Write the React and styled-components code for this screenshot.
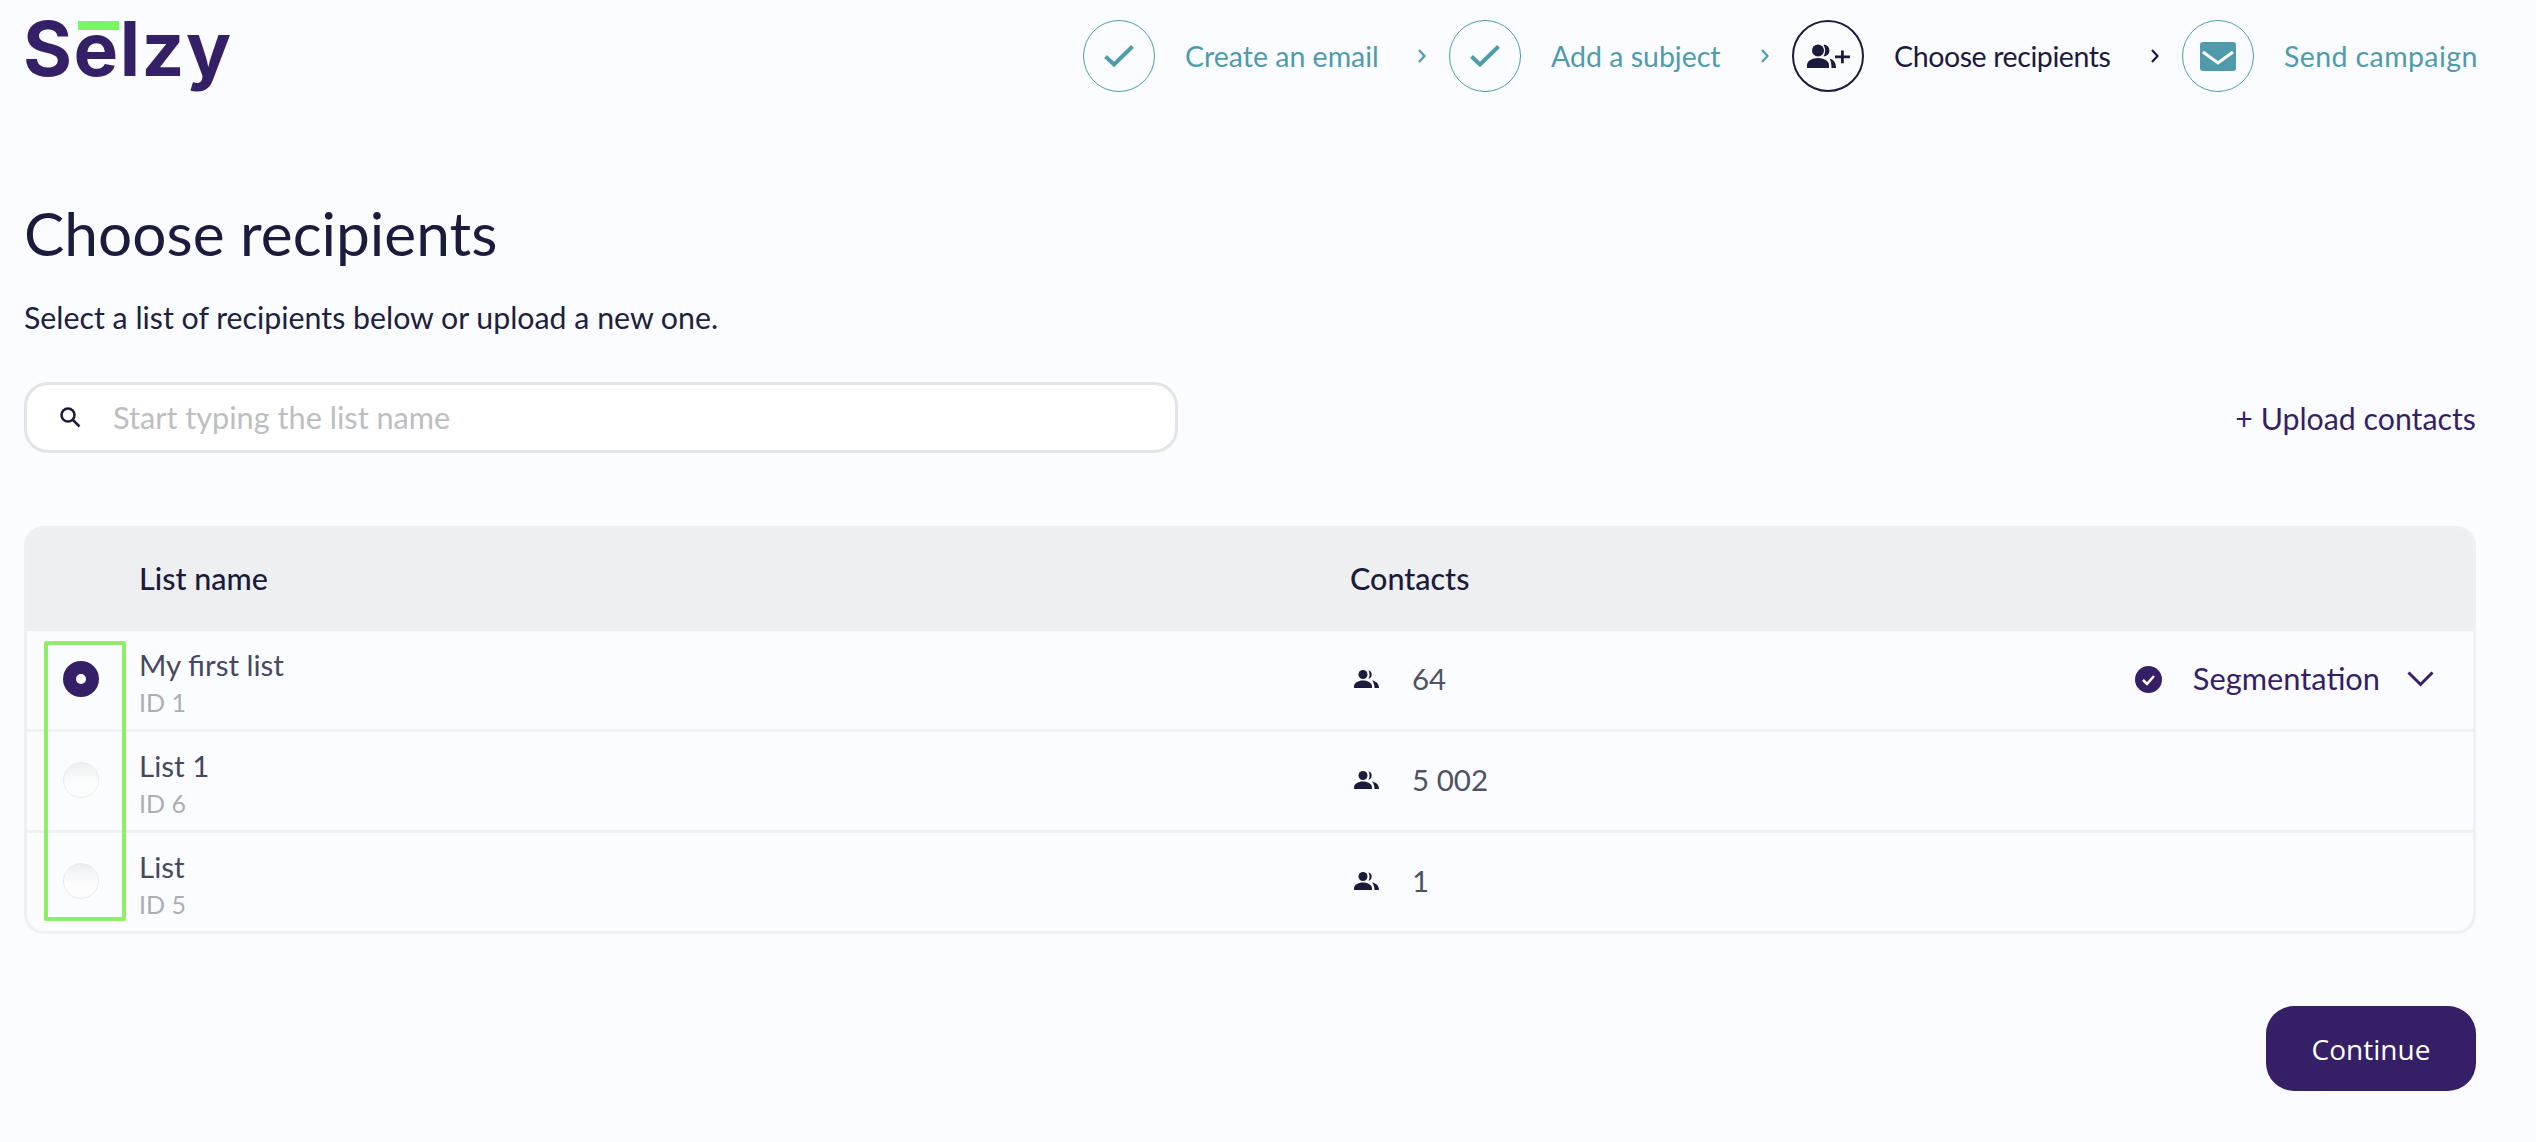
import React from 'react';
import styled, { createGlobalStyle } from 'styled-components';

const PURPLE = '#351f66';
const INK = '#1b1b3d';
const TEAL = '#4f9bab';

const GlobalStyle = createGlobalStyle`
  html, body {
    margin: 0;
    padding: 0;
    background: #fbfcff;
    font-family: Lato, "Open Sans", sans-serif;
    color: ${INK};
  }
  * { box-sizing: border-box; }
`;

const Page = styled.div`
  width: 2536px;
  height: 1142px;
  padding: 20px 60px 0 24px;
  overflow: hidden;
`;

const TopBar = styled.header`
  display: flex;
  align-items: flex-start;
  justify-content: space-between;
  height: 72px;
`;

const Logo = styled.div`
  font-family: Inter, sans-serif;
  font-weight: 700;
  font-size: 75px;
  line-height: 58px;
  letter-spacing: 1.5px;
  margin-left: -1px;
  color: ${PURPLE};
`;

const LogoE = styled.span`
  position: relative;
  &::before {
    content: '';
    position: absolute;
    left: 4px;
    right: 1px;
    top: 18px;
    height: 9px;
    background: #75fb5f;
  }
`;

const Steps = styled.nav`
  display: flex;
  align-items: center;
  margin-right: -1px;
`;

const Step = styled.div`
  display: flex;
  align-items: center;
  gap: 30px;
`;

const StepCircle = styled.div`
  width: 72px;
  height: 72px;
  border-radius: 50%;
  border: ${p => (p.$active ? '2px' : '1.5px')} solid ${p => (p.$active ? INK : TEAL)};
  display: flex;
  align-items: center;
  justify-content: center;
`;

const StepLabel = styled.span`
  font-size: 28.5px;
  line-height: 36px;
  white-space: nowrap;
  width: ${p => p.$width}px;
  letter-spacing: ${p => p.$tracking || 0}px;
  color: ${p => (p.$active ? INK : TEAL)};
`;

const StepArrow = styled.svg`
  width: 10px;
  height: 14px;
  margin: 0 22px 0 40px;
  fill: none;
  stroke: ${p => (p.$dark ? INK : TEAL)};
  stroke-width: 2.2;
`;

const Title = styled.h1`
  margin: 105px 0 0;
  font-weight: 400;
  font-size: 60.4px;
  line-height: 72px;
  color: ${INK};
`;

const Subtitle = styled.p`
  margin: 30px 0 0;
  font-size: 30.3px;
  line-height: 36px;
  color: #20203f;
`;

const SearchRow = styled.div`
  display: flex;
  align-items: center;
  justify-content: space-between;
  margin-top: 47px;
`;

const SearchBox = styled.div`
  width: 1154px;
  height: 71px;
  background: #fff;
  border: 3px solid #e2e4e6;
  border-radius: 24px;
  display: flex;
  align-items: center;
  padding-left: 33px;
  gap: 30px;
`;

const SearchInput = styled.input`
  flex: 1;
  border: 0;
  outline: 0;
  background: transparent;
  font-family: inherit;
  font-size: 30.7px;
  color: ${INK};
  &::placeholder {
    color: #bdbec2;
    opacity: 1;
  }
`;

const UploadLink = styled.a`
  font-size: 30.3px;
  line-height: 36px;
  color: ${PURPLE};
`;

const Table = styled.div`
  position: relative;
  width: 2452px;
  margin-top: 73px;
  border: 3px solid #eff0f2;
  border-radius: 20px;
  overflow: hidden;
`;

const RadioHighlight = styled.div`
  position: absolute;
  left: 17px;
  top: 112px;
  width: 82px;
  height: 280px;
  border: 4px solid #90ee66;
  border-radius: 2px;
  pointer-events: none;
`;

const Grid = styled.div`
  display: grid;
  grid-template-columns: 112px 1211px 1fr auto;
  align-items: center;
`;

const HeadRow = styled(Grid)`
  height: 102px;
  background: #eeeff1;
  padding-bottom: 5px;
`;

const HeadCell = styled.div`
  font-size: 30.5px;
  line-height: 36px;
  font-weight: 500;
  color: ${INK};
`;

const Row = styled(Grid)`
  height: ${p => (p.$last ? 98 : 101)}px;
  padding-bottom: 2px;
  border-bottom: ${p => (p.$last ? 0 : '3px solid #eff0f2')};
`;

const RadioCell = styled.div`
  display: flex;
  justify-content: center;
  padding-right: 4px;
`;

const Radio = styled.span`
  width: 36px;
  height: 36px;
  border-radius: 50%;
  display: flex;
  align-items: center;
  justify-content: center;
  background: ${p => (p.$checked ? PURPLE : 'linear-gradient(#eeeff0, #fdfdfe 60%)')};
  border: ${p => (p.$checked ? '0' : '1px solid #e9eaeb')};
  &::after {
    content: '';
    display: ${p => (p.$checked ? 'block' : 'none')};
    width: 10px;
    height: 10px;
    border-radius: 50%;
    background: #fff;
  }
`;

const NameCell = styled.div`
  display: flex;
  flex-direction: column;
  padding-top: 7px;
`;

const ListName = styled.span`
  font-size: 29.5px;
  line-height: 36px;
  color: #454a60;
`;

const ListId = styled.span`
  margin-top: 2px;
  font-size: 25px;
  line-height: 34px;
  color: #adaeb5;
`;

const ContactsCell = styled.div`
  display: flex;
  align-items: center;
  gap: 33px;
  padding-left: 4px;
`;

const ContactsCount = styled.span`
  font-size: 29.5px;
  line-height: 36px;
  color: #4f5263;
`;

const SegmentCell = styled.div`
  display: flex;
  align-items: center;
  padding-right: 39px;
`;

const SegmentText = styled.span`
  margin: 0 27px 0 31px;
  font-size: 30.8px;
  line-height: 36px;
  color: ${PURPLE};
`;

const Footer = styled.div`
  display: flex;
  justify-content: flex-end;
  margin-top: 72px;
`;

const ContinueButton = styled.button`
  width: 210px;
  height: 85px;
  border: 0;
  border-radius: 28px;
  background: ${PURPLE};
  color: #fff;
  font-family: "Open Sans", sans-serif;
  font-size: 28px;
`;

const CheckIcon = () => (
  <svg width="30" height="22" viewBox="0 0 30 22" fill="none" stroke={TEAL} strokeWidth="4">
    <path d="M1.500 11.500l8.500 8L28.500 1.500" />
  </svg>
);

const MailIcon = () => (
  <svg width="36" height="29" viewBox="0 0 36 29">
    <rect width="36" height="29" rx="3" fill={TEAL} />
    <path d="M3 10l15 11L33 10" fill="none" stroke="#fff" strokeWidth="3" />
  </svg>
);

const PeopleIcon = () => (
  <svg width="25" height="18" viewBox="0 0 25 18" fill={INK}>
    <circle cx="9" cy="4.500" r="4.500" />
    <path d="M0 18v-1.500C0 13 4 10.500 9 10.500s9 2.500 9 6V18z" />
    <path d="M14.500 0.200a4.500 4.500 0 0 1 0 8.600a10 10 0 0 0 0-8.600z" />
    <path d="M18 10.500c4 .8 7 3 7 7.500h-4.500c0-3-.8-5.500-2.500-7.500z" />
  </svg>
);

const PeoplePlusIcon = () => (
  <svg width="43" height="24" viewBox="0 0 43 24" fill={INK}>
    <circle cx="11" cy="6.500" r="6" />
    <path d="M0 24v-3c0-4 5-7 11-7s11 3 11 7v3z" />
    <path d="M16.500 .500a6 6 0 0 1 0 12a13 13 0 0 0 0-12z" />
    <path d="M22.500 14.500c4 1 6.500 4 6.500 9.500h-4.500c0-4-.5-7-2-9.500z" />
    <path d="M34 6.500h2.800v5H43v2.800h-6.200v5H34v-5h-6v-2.800h6z" />
  </svg>
);

const SearchIcon = () => (
  <svg width="21" height="21" viewBox="0 0 21 21" fill="none" stroke={INK} strokeWidth="2.500">
    <circle cx="8" cy="8" r="6.500" />
    <path d="M12.500 12.500l7 7" />
  </svg>
);

const SegmentCheck = () => (
  <svg width="27" height="27" viewBox="0 0 27 27">
    <circle cx="13.500" cy="13.500" r="13.500" fill={PURPLE} />
    <path d="M8 14l4 4 7-8" fill="none" stroke="#fff" strokeWidth="2.500" />
  </svg>
);

const ChevronDown = () => (
  <svg width="27" height="16" viewBox="0 0 27 16" fill="none" stroke={PURPLE} strokeWidth="3">
    <path d="M1.500 1.500l12 12 12-12" />
  </svg>
);

const Arrow = ({ dark }) => (
  <StepArrow viewBox="0 0 10 14" $dark={dark}>
    <path d="M2 1l5.500 6L2 13" />
  </StepArrow>
);

const lists = [
  { name: 'My first list', id: 1, contacts: '64', checked: true },
  { name: 'List 1', id: 6, contacts: '5 002' },
  { name: 'List', id: 5, contacts: '1', last: true },
];

export default function App() {
  return (
    <Page>
      <GlobalStyle />
      <TopBar>
        <Logo>S<LogoE>e</LogoE>lzy</Logo>
        <Steps>
          <Step>
            <StepCircle><CheckIcon /></StepCircle>
            <StepLabel $width={192}>Create an email</StepLabel>
          </Step>
          <Arrow />
          <Step>
            <StepCircle><CheckIcon /></StepCircle>
            <StepLabel $width={169}>Add a subject</StepLabel>
          </Step>
          <Arrow />
          <Step>
            <StepCircle $active><PeoplePlusIcon /></StepCircle>
            <StepLabel $active $width={216} $tracking={-0.4}>Choose recipients</StepLabel>
          </Step>
          <Arrow dark />
          <Step>
            <StepCircle><MailIcon /></StepCircle>
            <StepLabel $width={193} $tracking={0.4}>Send campaign</StepLabel>
          </Step>
        </Steps>
      </TopBar>

      <Title>Choose recipients</Title>
      <Subtitle>Select a list of recipients below or upload a new one.</Subtitle>

      <SearchRow>
        <SearchBox>
          <SearchIcon />
          <SearchInput placeholder="Start typing the list name" />
        </SearchBox>
        <UploadLink>+ Upload contacts</UploadLink>
      </SearchRow>

      <Table>
        <HeadRow>
          <span />
          <HeadCell>List name</HeadCell>
          <HeadCell>Contacts</HeadCell>
        </HeadRow>
        {lists.map(list => (
          <Row key={list.id} $last={list.last}>
            <RadioCell><Radio $checked={list.checked} /></RadioCell>
            <NameCell>
              <ListName>{list.name}</ListName>
              <ListId>ID {list.id}</ListId>
            </NameCell>
            <ContactsCell>
              <PeopleIcon />
              <ContactsCount>{list.contacts}</ContactsCount>
            </ContactsCell>
            {list.checked ? (
              <SegmentCell>
                <SegmentCheck />
                <SegmentText>Segmentation</SegmentText>
                <ChevronDown />
              </SegmentCell>
            ) : <span />}
          </Row>
        ))}
        <RadioHighlight />
      </Table>

      <Footer>
        <ContinueButton>Continue</ContinueButton>
      </Footer>
    </Page>
  );
}
